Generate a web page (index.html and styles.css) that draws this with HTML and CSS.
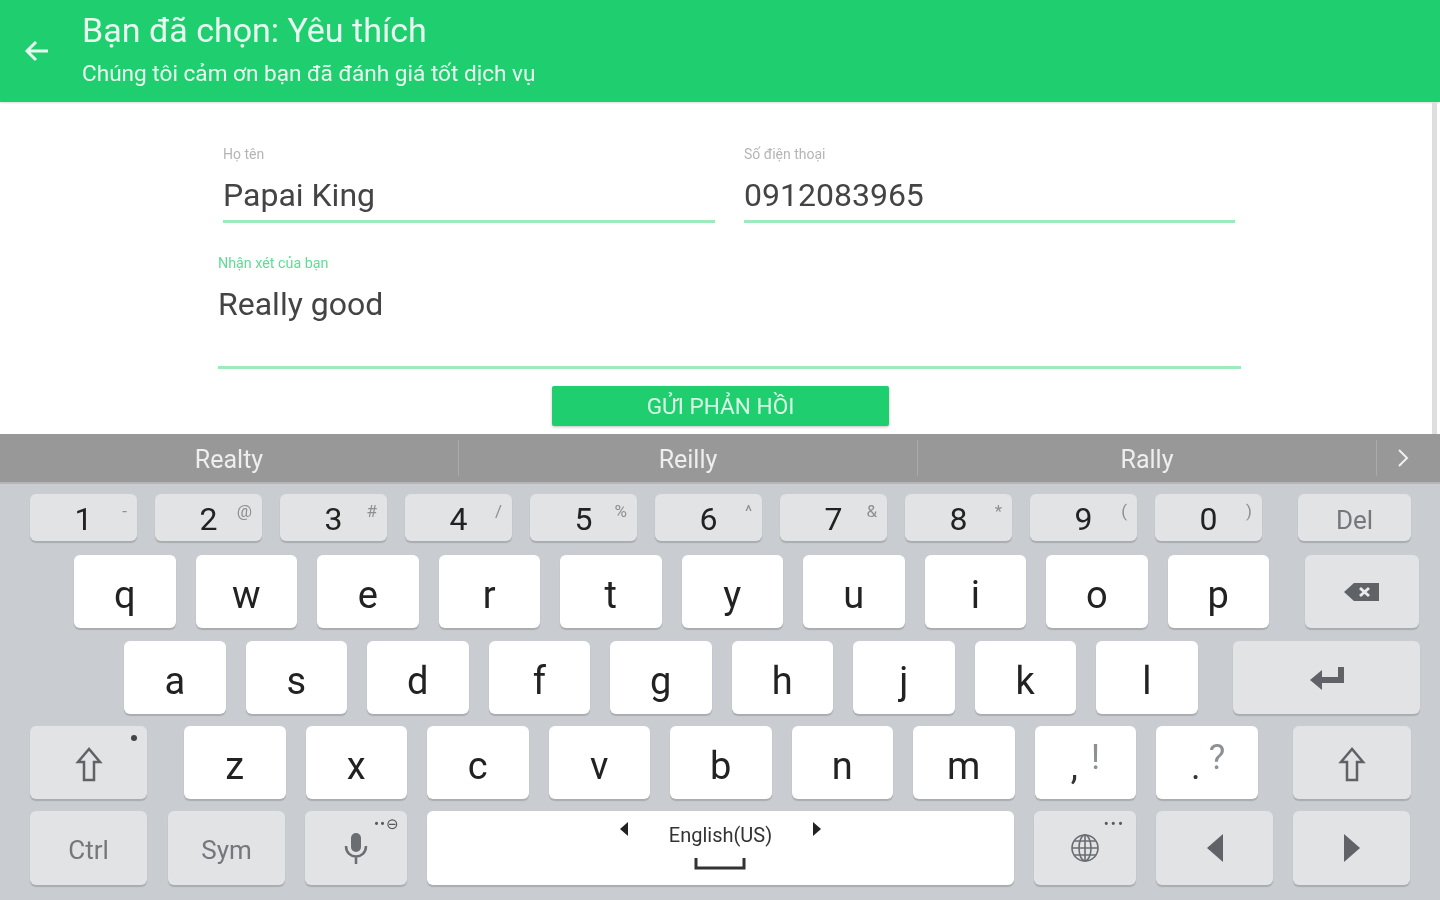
FILE: index.html
```html
<!DOCTYPE html>
<html lang="en">
<head>
    <meta charset="UTF-8">
    <meta name="viewport" content="width=device-width, initial-scale=1.0">
    <title>Phan hoi</title>
    <link rel="stylesheet" href="styles.css">
</head>
<body>
    <header class="appbar">
        <svg class="back" viewBox="0 0 28 28" width="28" height="28">
            <path d="M25 14H4M13 5l-9 9 9 9" fill="none" stroke="#e6f9ee" stroke-width="3"/>
        </svg>
        <div class="appbar-text">
            <h1>Bạn đã chọn: Yêu thích</h1>
            <p>Chúng tôi cảm ơn bạn đã đánh giá tốt dịch vụ</p>
        </div>
    </header>

    <main class="form">
        <div class="form-row">
            <div class="field">
                <label>Họ tên</label>
                <div class="value">Papai King</div>
            </div>
            <div class="field">
                <label>Số điện thoại</label>
                <div class="value">0912083965</div>
            </div>
        </div>
        <div class="field field-wide">
            <label>Nhận xét của bạn</label>
            <div class="value">Really good</div>
        </div>
        <button class="send">GỬI PHẢN HỒI</button>
    </main>

    <section class="keyboard">
        <div class="suggest">
            <span class="word">Realty</span>
            <span class="word">Reilly</span>
            <span class="word">Rally</span>
            <span class="more">
                <svg viewBox="0 0 14 22" width="14" height="22"><path d="M3 3l8 8-8 8" fill="none" stroke="#f0f0f0" stroke-width="2"/></svg>
            </span>
        </div>

        <div class="keys">
            <div class="row row-num">
                <div class="key num">1<sup>-</sup></div>
                <div class="key num">2<sup>@</sup></div>
                <div class="key num">3<sup>#</sup></div>
                <div class="key num">4<sup>/</sup></div>
                <div class="key num">5<sup>%</sup></div>
                <div class="key num">6<sup>^</sup></div>
                <div class="key num">7<sup>&amp;</sup></div>
                <div class="key num">8<sup>*</sup></div>
                <div class="key num">9<sup>(</sup></div>
                <div class="key num">0<sup>)</sup></div>
                <div class="key fn label del">Del</div>
            </div>
            <div class="row row-q">
                <div class="key">q</div>
                <div class="key">w</div>
                <div class="key">e</div>
                <div class="key">r</div>
                <div class="key">t</div>
                <div class="key">y</div>
                <div class="key">u</div>
                <div class="key">i</div>
                <div class="key">o</div>
                <div class="key">p</div>
                <div class="key fn backspace">
                    <svg viewBox="0 0 38 22" width="38" height="22">
                        <path d="M1 11L11 2h25v18H11z" fill="#5f6266"/>
                        <path d="M17 7l9 8M26 7l-9 8" stroke="#e9eaec" stroke-width="3"/>
                    </svg>
                </div>
            </div>
            <div class="row row-a">
                <div class="key">a</div>
                <div class="key">s</div>
                <div class="key">d</div>
                <div class="key">f</div>
                <div class="key">g</div>
                <div class="key">h</div>
                <div class="key">j</div>
                <div class="key">k</div>
                <div class="key">l</div>
                <div class="key fn enter">
                    <svg viewBox="0 0 36 26" width="36" height="26">
                        <path d="M32 2v13H12" fill="none" stroke="#5f6266" stroke-width="6"/>
                        <path d="M1 15L13 5v20z" fill="#5f6266"/>
                    </svg>
                </div>
            </div>
            <div class="row row-z">
                <div class="key fn shift">
                    <svg viewBox="0 0 28 36" width="28" height="36"><path d="M14 2L3 15h6v18h10V15h6z" fill="none" stroke="#5f6266" stroke-width="2.5"/></svg>
                    <span class="dot"></span>
                </div>
                <div class="key">z</div>
                <div class="key">x</div>
                <div class="key">c</div>
                <div class="key">v</div>
                <div class="key">b</div>
                <div class="key">n</div>
                <div class="key">m</div>
                <div class="key punct">,<sup>!</sup></div>
                <div class="key punct">.<sup>?</sup></div>
                <div class="key fn shift shift-right">
                    <svg viewBox="0 0 28 36" width="28" height="36"><path d="M14 2L3 15h6v18h10V15h6z" fill="none" stroke="#5f6266" stroke-width="2.5"/></svg>
                </div>
            </div>
            <div class="row row-bottom">
                <div class="key fn wide label ctrl">Ctrl</div>
                <div class="key fn wide label">Sym</div>
                <div class="key fn">
                    <svg viewBox="0 0 24 34" width="24" height="34">
                        <rect x="7" y="2" width="10" height="19" rx="5" fill="#6a6d71"/>
                        <path d="M2 15c0 14 20 14 20 0M12 25v8" fill="none" stroke="#6a6d71" stroke-width="2.5"/>
                    </svg>
                    <span class="hint">••⊖</span>
                </div>
                <div class="key space">
                    <svg class="lang-arrow" viewBox="0 0 8 14" width="8" height="14"><path d="M8 0v14L0 7z" fill="#222"/></svg>
                    <div class="lang">
                        <span>English(US)</span>
                        <svg viewBox="0 0 52 14" width="52" height="14"><path d="M2 1v10h48V1" fill="none" stroke="#333" stroke-width="3"/></svg>
                    </div>
                    <svg class="lang-arrow" viewBox="0 0 8 14" width="8" height="14"><path d="M0 0v14l8-7z" fill="#222"/></svg>
                </div>
                <div class="key fn">
                    <svg viewBox="0 0 30 30" width="30" height="30" fill="none" stroke="#6a6d71" stroke-width="1.6">
                        <circle cx="15" cy="15" r="13"/>
                        <ellipse cx="15" cy="15" rx="6" ry="13"/>
                        <path d="M15 2v26M2 15h26M4 8h22M4 22h22"/>
                    </svg>
                    <span class="hint hint-dots">•••</span>
                </div>
                <div class="key fn wide">
                    <svg viewBox="0 0 16 28" width="16" height="28"><path d="M16 0v28L0 14z" fill="#5f6266"/></svg>
                </div>
                <div class="key fn wide">
                    <svg viewBox="0 0 16 28" width="16" height="28"><path d="M0 0v28l16-14z" fill="#5f6266"/></svg>
                </div>
            </div>
        </div>
    </section>
</body>
</html>
```

FILE: styles.css
```css
/* Page */
html, body {
    height: 100%;
}

body {
    margin: 0;
    height: 900px;
    overflow: hidden;
    display: flex;
    flex-direction: column;
    background-color: #fff;
    font-family: Roboto, "Noto Sans", sans-serif;
    filter: blur(0.5px); /* reference is a soft, upscaled capture */
}

/* Green bar */
.appbar {
    height: 102px;
    flex: none;
    display: flex;
    align-items: center;
    background-color: #1fcf6f;
    box-shadow: 0 1px 2px rgba(0, 0, 0, 0.15);
    color: #e9fbf0;
    box-sizing: border-box;
    padding-left: 23px;
}

.back {
    margin-right: 31px;
}

.appbar h1 {
    margin: -5px 0 0;
    font-size: 34px;
    font-weight: 400;
    line-height: 40px;
}

.appbar p {
    margin: 10px 0 0;
    font-size: 22.6px;
    line-height: 28px;
}

/* Form */
.form {
    flex: 1;
    box-sizing: border-box;
    padding: 41px 0 0 218px;
    margin-right: 3px;
    border-right: 5px solid #dedede;
}

.form-row {
    display: flex;
    gap: 29px;
    padding-left: 5px;
}

.field {
    width: 492px;
}

.field + .field {
    width: 491px;
}

.field label {
    display: block;
    font-size: 14px;
    line-height: 22px;
    color: #b5b5b5;
}

.value {
    font-size: 32px;
    line-height: 38px;
    margin-top: 11px;
    padding-bottom: 6px;
    color: #444;
    border-bottom: 3px solid #9debbc;
}

.field-wide {
    width: 1023px;
    margin-top: 29px;
}

.field-wide label {
    font-size: 14.3px;
    color: #5fdc94;
}

.field-wide .value {
    height: 75px;
    margin-top: 11px;
}

.send {
    display: block;
    width: 337px;
    height: 40px;
    margin: 17px 0 0 334px;
    padding: 0;
    border: none;
    border-radius: 2px;
    background-color: #1fcf6f;
    box-shadow: 0 1px 3px rgba(0, 0, 0, 0.25);
    color: #d9f7e5;
    font-family: inherit;
    font-size: 22.6px;
}

/* Keyboard */
.keyboard {
    flex: none;
    height: 466px;
    background-color: #c9ccd0;
}

.suggest {
    height: 50px;
    display: flex;
    align-items: center;
    background-color: #989898;
    border-bottom: 2px solid #b4b6b9;
    box-sizing: border-box;
    color: #eeeeee;
    font-size: 25px;
}

.word {
    width: 458px;
    height: 36px;
    line-height: 40px;
    text-align: center;
    border-right: 1px solid #aaaaaa;
}

.more {
    flex: 1;
    display: flex;
    justify-content: center;
    padding-right: 11px;
}

.keys {
    padding-top: 10px;
}

.row {
    display: flex;
    gap: 20px;
    margin-bottom: 12px;
}

/* Keys */
.key {
    position: relative;
    width: 101.5px;
    height: 73px;
    flex: none;
    display: flex;
    align-items: center;
    justify-content: center;
    box-sizing: border-box;
    padding-top: 6px;
    border-radius: 6px;
    background-color: #fff;
    box-shadow: 0 2px 1px #a9acb0;
    color: #222;
    font-size: 38px;
}

.fn {
    padding-top: 0;
    background-color: #e1e3e5;
    color: #74777b;
    font-size: 26px;
}

.label {
    padding-top: 4px;
}

.row-num {
    height: 47px;
    gap: 18px;
    padding-left: 30px;
    margin-bottom: 14px;
}

.num {
    width: 107px;
    height: 47px;
    padding-top: 2px;
    background-color: #e1e3e5;
    font-size: 32px;
}

.num sup {
    position: absolute;
    top: 7px;
    right: 10px;
    font-size: 17px;
    line-height: 20px;
    color: #8d9094;
}

.del {
    width: 113px;
    height: 47px;
    margin-left: 18px;
}

.row-q {
    padding-left: 74px;
    margin-bottom: 13px;
}

.backspace {
    width: 114px;
    margin-left: 16px;
}

.row-a {
    padding-left: 124px;
}

.enter {
    width: 187px;
    margin-left: 15.5px;
}

.row-z {
    padding-left: 30px;
}

.shift {
    width: 117px;
    margin-right: 17px;
    padding-top: 5px;
}

.shift-right {
    width: 118px;
    margin: 0 0 0 15.5px;
}

.dot {
    position: absolute;
    top: 9px;
    right: 10px;
    width: 6px;
    height: 6px;
    border-radius: 50%;
    background-color: #444;
}

.punct {
    font-size: 36px;
    color: #333;
    padding: 8px 22px 0 0;
}

.punct sup {
    position: absolute;
    top: 11px;
    left: 61px;
    transform: translateX(-50%);
    font-size: 35px;
    line-height: 42px;
    color: #8d9094;
}

.row-bottom {
    padding-left: 30px;
    margin-bottom: 0;
}

.row-bottom .key {
    height: 74px;
    width: 102px;
}

.row-bottom .wide {
    width: 117px;
}

.row-bottom .ctrl {
    margin-right: 1px;
}

.hint {
    position: absolute;
    top: 4px;
    right: 7px;
    font-size: 15px;
    letter-spacing: 1px;
    color: #55585c;
}

.hint-dots {
    right: 11px;
    letter-spacing: 2px;
}

.row-bottom .space {
    width: 587px;
    gap: 41px;
    align-items: flex-start;
    padding-top: 10px;
}

.lang {
    display: flex;
    flex-direction: column;
    align-items: center;
    font-size: 20px;
    color: #333;
    line-height: 28px;
}

.lang svg {
    margin-top: 8px;
}

.lang-arrow {
    margin-top: 1px;
}
```
